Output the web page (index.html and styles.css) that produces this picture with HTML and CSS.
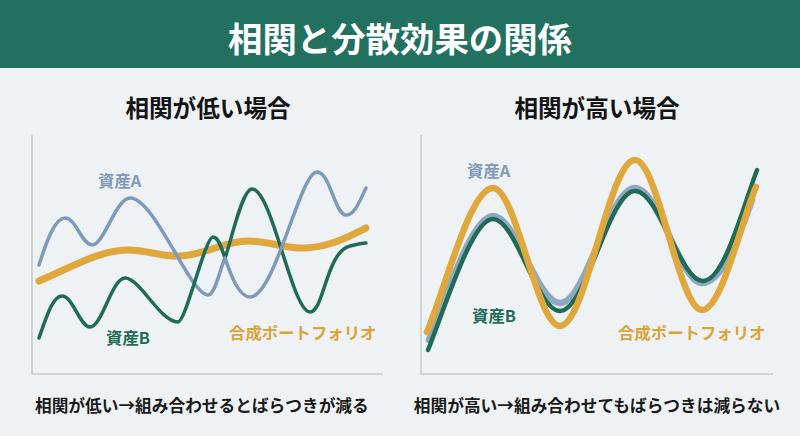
FILE: index.html
```html
<!DOCTYPE html>
<html lang="ja">
<head>
<meta charset="utf-8">
<title>相関と分散効果の関係</title>
<link rel="stylesheet" href="styles.css">
</head>
<body>
<header class="top">
  <h1 class="title">相関と分散効果の関係</h1>
</header>
<main class="panels">
  <section class="panel">
    <h2 class="subtitle">相関が低い場合</h2>
    <div class="chart low">
      <svg class="plot" viewBox="0 0 352 240" width="352" height="240">
        <g transform="translate(-32,-135)" fill="none" stroke-linecap="round" stroke-linejoin="round">
          <path class="axis" d="M32,135 L32,374 L383,374"/>
          <path class="gold" stroke-width="7" d="M39,281 C70,268 100,250 127,250 C150,250 160,257 180,256 C205,255 225,241 248,241 C270,241 285,249 305,248 C330,247 350,236 366,228"/>
          <path class="blue" stroke-width="3.5" d="M39,265 C47,240 55,218 65,218 C76,218 82,245 92,245 C104,245 116,198 130,198 C155,198 190,295 208,295 C215,295 219,272 225,258"/>
          <path class="green" stroke-width="3.5" d="M225,258 C231,242 242,189 252,189 C272,189 292,312 310,312 C324,312 326,252 350,246 C358,244 362,243 366,243"/>
          <path class="green" stroke-width="3.5" d="M39,338 C47,315 53,296 62,296 C73,296 80,327 90,327 C102,327 112,278 125,278 C140,278 160,322 178,322 C186,322 205,237 213,237 C219,237 222,250 225,258"/>
          <path class="blue" stroke-width="3.5" d="M225,258 C230,272 238,297 250,297 C275,297 300,172 317,172 C330,172 335,215 346,215 C355,215 360,200 366,188"/>
        </g>
      </svg>
      <span class="lbl lbl-blue pos-la">資産A</span>
      <span class="lbl lbl-green pos-lb">資産B</span>
      <span class="lbl lbl-gold pos-lp">合成ポートフォリオ</span>
    </div>
    <p class="caption caption-left">相関が低い→組み合わせるとばらつきが減る</p>
  </section>
  <section class="panel">
    <h2 class="subtitle">相関が高い場合</h2>
    <div class="chart high">
      <svg class="plot" viewBox="0 0 352 240" width="352" height="240">
        <g transform="translate(-421,-135)" fill="none" stroke-linecap="round" stroke-linejoin="round">
          <path class="axis" d="M421,135 L421,374 L773,374"/>
          <path class="blue-soft" stroke-width="6.5" d="M429,340 C446,298 472,216 493,216 C516,216 537,303 560,303 C586,303 609,188 635,188 C659,188 680,283 702,283 C722,283 738,240 752,200"/>
          <path class="green" stroke-width="4.5" d="M428,350 C446,305 472,219 493,219 C516,219 537,311 560,311 C586,311 609,191 635,191 C659,191 680,281 703,281 C724,281 742,210 757,170"/>
          <path class="gold" stroke-width="6.5" d="M427,332 C445,290 470,188 493,188 C516,188 537,326 560,326 C586,326 609,160 635,160 C658,160 679,310 702,310 C722,310 742,218 756,187"/>
        </g>
      </svg>
      <span class="lbl lbl-blue pos-ra">資産A</span>
      <span class="lbl lbl-green pos-rb">資産B</span>
      <span class="lbl lbl-gold pos-rp">合成ポートフォリオ</span>
    </div>
    <p class="caption">相関が高い→組み合わせてもばらつきは減らない</p>
  </section>
</main>
</body>
</html>
```

FILE: styles.css
```css
* {
  box-sizing: border-box;
}

html, body {
  margin: 0;
  padding: 0;
}

body {
  width: 800px;
  height: 436px;
  overflow: hidden;
  background: #eef2f4;
  font-family: "Noto Sans CJK JP", "Noto Sans", sans-serif;
  color: #161616;
}

.top {
  height: 68px;
  background: #22705f;
  display: flex;
  align-items: center;
  justify-content: center;
}

.title {
  margin: 6px 0 0;
  font-size: 34.4px;
  line-height: 44px;
  font-weight: 700;
  color: #ffffff;
  letter-spacing: 0;
}

.panels {
  display: grid;
  grid-template-columns: 352px 352px;
  column-gap: 37px;
  padding-left: 32px;
}

.panel {
  display: flex;
  flex-direction: column;
  align-items: center;
}

.subtitle {
  margin: 23px 0 12px;
  font-size: 23.6px;
  line-height: 32px;
  font-weight: 700;
  color: #141414;
}

.chart {
  position: relative;
  width: 352px;
  height: 240px;
}

.plot {
  position: absolute;
  left: 0;
  top: 0;
  overflow: visible;
}

.axis {
  stroke: #c4cacd;
  stroke-width: 1.5;
  stroke-linecap: butt;
}

.gold {
  stroke: #e0a83c;
}

.blue {
  stroke: #7e9aba;
}

.blue-soft {
  stroke: #8ea7c4;
}

.green {
  stroke: #1f6b58;
}

.lbl {
  position: absolute;
  font-size: 16.4px;
  line-height: 20px;
  font-weight: 700;
  white-space: nowrap;
}

.lbl-blue {
  color: #7f9aba;
}

.lbl-green {
  color: #1f6b58;
}

.lbl-gold {
  color: #dca33a;
}

.pos-la { left: 66px; top: 35px; }
.pos-lb { left: 74px; top: 192px; }
.pos-lp { left: 197px; top: 187px; }
.pos-ra { left: 46px; top: 25px; }
.pos-rb { left: 51px; top: 170px; }
.pos-rp { left: 197px; top: 187px; }

.caption {
  margin: 18px 0 0;
  font-size: 16.7px;
  line-height: 24px;
  font-weight: 700;
  color: #1a1a1a;
  white-space: nowrap;
  display: flex;
  justify-content: center;
  width: 100%;
}

.caption-left {
  justify-content: flex-start;
  padding-left: 3px;
}
```
